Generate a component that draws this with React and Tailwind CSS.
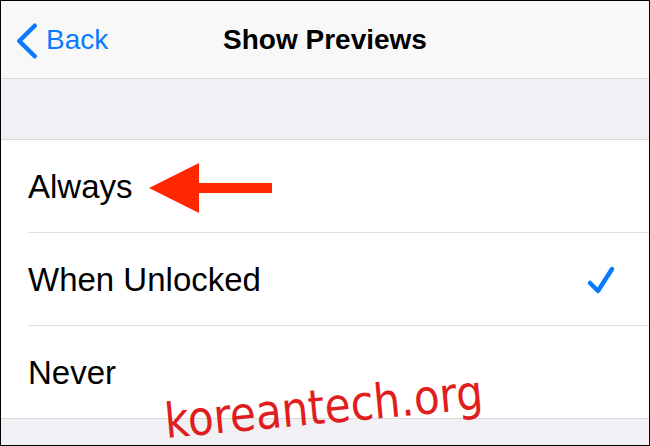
import React from "react";

const font = { fontFamily: '"Liberation Sans", Arial, sans-serif' };

function Row({ label, children, last }) {
  return (
    <div className="pl-[27px] bg-white">
      <div
        className={
          "h-[92px] flex items-center pr-[32px] " +
          (last ? "" : "border-b border-[#dedee2] box-content")
        }
      >
        <span className="text-[33px] text-black leading-none">{label}</span>
        {children}
      </div>
    </div>
  );
}

export default function App() {
  return (
    <div
      className="relative w-[650px] h-[446px] border border-black bg-white overflow-hidden flex flex-col"
      style={font}
    >
      {/* nav bar */}
      <div className="h-[77px] box-content border-b border-[#d9d9dc] bg-[#f8f8f9] grid grid-cols-[1fr_auto_1fr] items-center">
        <div className="flex items-center pl-[14px]">
          <svg width="24" height="40" viewBox="0 0 24 40" className="mt-[2px]">
            <polyline
              points="19.75,4.75 4.25,20 19.75,35.25"
              fill="none"
              stroke="#0a7aff"
              strokeWidth="4.5"
              strokeLinecap="round"
              strokeLinejoin="round"
            />
          </svg>
          <span className="ml-[7px] text-[28px] leading-none text-[#0a7aff]">Back</span>
        </div>
        <div className="text-[28px] font-bold leading-none text-black">Show Previews</div>
        <div />
      </div>

      {/* grey spacer */}
      <div className="h-[60px] box-content border-b border-[#d9d9dc] bg-[#f1f1f5]" />

      <Row label="Always">
        <svg width="124" height="50" viewBox="0 0 124 50" className="ml-[16px] mt-[4px]">
          <polygon
            points="0,25 50,0 50,20 123,20 123,30 50,30 50,50"
            fill="#ff2600"
          />
        </svg>
      </Row>
      <Row label="When Unlocked">
        <div className="flex-1" />
        <svg width="32" height="32" viewBox="0 0 32 32" className="mt-[1px]">
          <polyline
            points="5,19 13,27 27,5"
            fill="none"
            stroke="#0a7aff"
            strokeWidth="4.5"
            strokeLinecap="round"
            strokeLinejoin="round"
          />
        </svg>
      </Row>
      <Row label="Never" last />

      {/* bottom grey */}
      <div className="flex-1 border-t border-[#d9d9dc] bg-[#f1f1f5]" />

      {/* watermark */}
      <span
        className="absolute left-[166px] top-[396px] text-[48px] leading-none text-[#e11e1e] whitespace-nowrap origin-bottom-left"
        style={{
          fontFamily: '"DejaVu Sans", Verdana, sans-serif',
          transform: "rotate(-5.3deg) scaleX(0.88)",
        }}
      >
        koreantech.org
      </span>
    </div>
  );
}
